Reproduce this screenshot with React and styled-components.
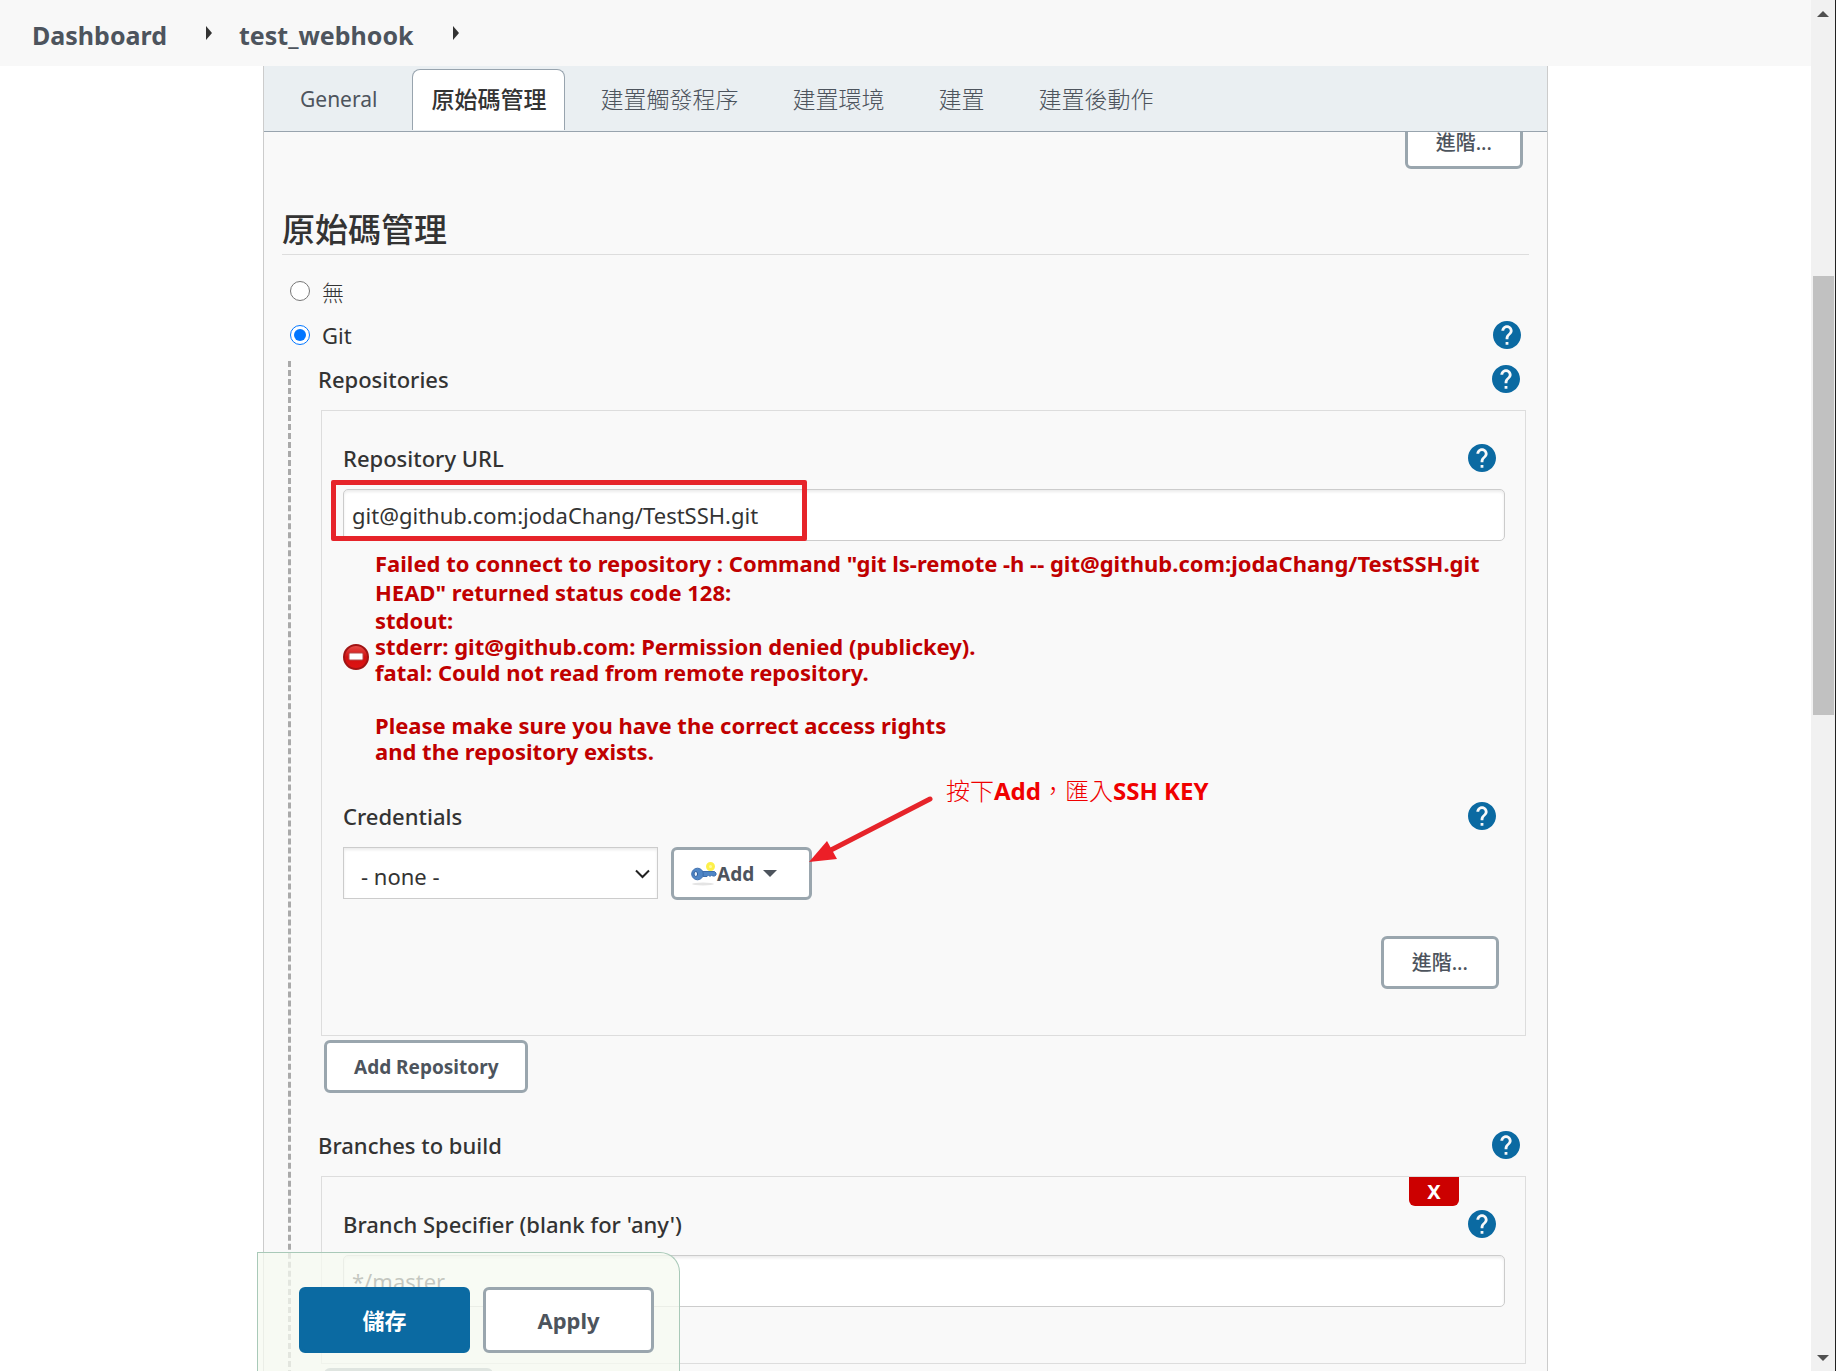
import React, { useState } from "react";
import styled, { createGlobalStyle, css } from "styled-components";

const GlobalStyle = createGlobalStyle`
  * {
    box-sizing: border-box;
  }
  body {
    margin: 0;
    background: #fff;
    color: #333;
    font-family: "Noto Sans", "Noto Sans CJK TC", sans-serif;
    font-size: 22px;
  }
  button, input, select {
    font-family: inherit;
    color: inherit;
  }
`;

const Page = styled.div`
  display: flex;
  height: 100vh;
  overflow: hidden;
`;

const Main = styled.div`
  flex: 1;
  min-width: 0;
  position: relative;
  overflow: hidden;
`;

const Breadcrumbs = styled.nav`
  display: flex;
  align-items: center;
  height: 66px;
  padding: 0 32px;
  background: #f8f8f8;
`;

const Crumb = styled.a`
  padding-top: 4px;
  color: #4d545d;
  font-size: 25px;
  font-weight: 700;
  line-height: 32px;
  text-decoration: none;
`;

const CrumbArrow = styled.span`
  margin: 0 27px 0 39px;
  border-left: 6px solid #333;
  border-top: 7px solid transparent;
  border-bottom: 7px solid transparent;
`;

const Panel = styled.div`
  margin: 0 263px;
  border: solid #ccc;
  border-width: 0 1px;
  background: #f9f9f9;
`;

const TabBar = styled.div`
  position: relative;
  z-index: 1;
  display: flex;
  gap: 16px;
  height: 66px;
  padding: 3px 17px 1px;
  background: #eaeff2;
  border-bottom: 1px solid #98a4ae;
`;

const Tab = styled.button`
  padding: 0 18px 2px;
  border: 1px solid transparent;
  border-bottom: 0;
  border-radius: 8px 8px 0 0;
  background: none;
  color: #4d545d;
  font-size: 23px;
  font-weight: 300;
  line-height: 32px;

  &:lang(en) {
    font-size: 21px;
    font-weight: 400;
  }
  ${(props) =>
    props.$active &&
    css`
      background: #fff;
      border-color: #98a4ae;
      color: #333;
      font-weight: 500;
    `}
`;

const Body = styled.form`
  margin: -16px 0 0;
  padding: 0 18px;
`;

const Button = styled.button`
  display: inline-flex;
  align-items: center;
  height: 53px;
  padding: ${(props) => (props.$menu ? "0 32px 0 17px" : "0 27px")};
  border: 3px solid #9aa6ae;
  border-radius: 6px;
  background: #fff;
  color: #4d545d;
  font-size: 19px;
  font-weight: 700;

  &:lang(zh) {
    padding: 0 28px 3px;
    font-size: 20px;
    font-weight: 500;
  }
`;

const ButtonRow = styled.div`
  display: flex;
  justify-content: ${(props) => (props.$end ? "flex-end" : "flex-start")};
  padding: 0 6px;
`;

const SectionTitle = styled.h2`
  margin: 37px 0 14px;
  border-bottom: 1px solid #ddd;
  font-size: 33px;
  font-weight: 500;
  line-height: 48px;
`;

const RadioRow = styled.div`
  display: flex;
  align-items: center;
  height: 44px;
  padding: 0 8px;

  label {
    flex: 1;
    padding-left: 12px;
  }
  label:lang(zh) {
    font-weight: 300;
  }
`;

const Radio = styled.input`
  width: 20px;
  height: 20px;
  margin: 0;
  accent-color: #0075ff;
`;

const Nested = styled.div`
  margin: 4px 0 0 6px;
  padding-left: 27px;
  border-left: 3px dashed #aaa;
`;

const LabelRow = styled.div`
  display: flex;
  align-items: center;
  justify-content: space-between;
  height: 36px;
  margin-bottom: 13px;
  padding-right: 9px;
  font-weight: 500;
`;

const HelpButton = styled.button`
  display: flex;
  padding: 0;
  border: 0;
  background: none;
  color: #0b6aa2;
`;

const Box = styled.div`
  position: relative;
  margin: 0 3px 4px;
  padding: 29px 20px ${(props) => (props.$short ? "56px" : "46px")} 21px;
  border: 1px solid #ddd;
`;

const fieldStyle = css`
  width: 100%;
  height: 52px;
  border: 1px solid #ccc;
  background: #fff;
  box-shadow: inset 0 2px 3px rgba(0, 0, 0, 0.08);
  font-size: 22px;
`;

const TextInput = styled.input`
  ${fieldStyle}
  display: block;
  padding: 0 8px;
  border-radius: 5px;
`;

const Highlighted = styled.div`
  position: relative;
`;

const Highlight = styled.div`
  position: absolute;
  left: -12px;
  top: -9px;
  width: 476px;
  height: 61px;
  border: 5px solid #e6242a;
  border-radius: 2px;
  pointer-events: none;
`;

const ErrorMessage = styled.div`
  display: flex;
  align-items: center;
  gap: 6px;
  margin: 8px 0 34px;
  color: #c00000;
  font-weight: 700;

  svg {
    flex: none;
  }
  p {
    margin: 0;
    line-height: 29px;
  }
  pre {
    margin: 0 0 27px;
    font: inherit;
    line-height: 26px;
  }
  pre:last-child {
    margin: 0;
  }
`;

const Credentials = styled.div`
  position: relative;
  display: flex;
  gap: 13px;
  margin-bottom: 36px;
`;

const SelectWrap = styled.div`
  position: relative;
  width: 315px;

  svg {
    position: absolute;
    right: 8px;
    top: 22px;
    pointer-events: none;
  }
`;

const Select = styled.select`
  ${fieldStyle}
  appearance: none;
  padding: 6px 17px 0;
  border-radius: 0;
`;

const Caret = styled.span`
  margin-left: 9px;
  border-top: 7px solid #4d545d;
  border-left: 7px solid transparent;
  border-right: 7px solid transparent;
`;

const Note = styled.div`
  position: absolute;
  left: 466px;
  top: -72px;
  display: flex;

  span {
    padding-left: 12px;
    color: #f00000;
    font-size: 24px;
    font-weight: 300;
    line-height: 32px;
    white-space: nowrap;
  }
  b {
    font-weight: 700;
  }
  svg {
    margin-top: 20px;
  }
`;

const DeleteButton = styled.button`
  position: absolute;
  top: 0;
  right: 66px;
  width: 50px;
  height: 29px;
  padding: 0;
  border: 0;
  border-radius: 0 0 6px 6px;
  background: #c00;
  color: #fff;
  font-size: 20px;
  font-weight: 700;
  line-height: 28px;
`;

const Spacer = styled.div`
  height: 34px;
`;

const SaveBar = styled.div`
  position: absolute;
  z-index: 2;
  left: 257px;
  bottom: 0;
  display: flex;
  gap: 13px;
  padding: 34px 25px 18px 41px;
  border: 1px solid #a9c9b8;
  border-bottom: 0;
  border-radius: 0 20px 0 0;
  background: rgba(245, 249, 240, 0.75);
`;

const SaveButton = styled.button`
  width: 171px;
  height: 66px;
  border: 3px solid ${(props) => (props.$primary ? "#0b6aa2" : "#9aa6ae")};
  border-radius: 6px;
  background: ${(props) => (props.$primary ? "#0b6aa2" : "#fff")};
  color: ${(props) => (props.$primary ? "#fff" : "#4d545d")};
  font-size: 22px;
  font-weight: 700;

  &:lang(zh) {
    padding-bottom: 4px;
  }
`;

const ScrollBar = styled.div`
  display: flex;
  flex-direction: column;
  align-items: center;
  justify-content: space-between;
  width: 25px;
  padding: 11px 0 10px;
  border-right: 1px solid #222;
  background: #f1f1f1;
`;

const ScrollTrack = styled.div`
  flex: 1;
  align-self: stretch;
  padding: 0 1px 0 2px;
`;

const ScrollThumb = styled.div`
  height: 439px;
  margin-top: 259px;
  background: #c1c1c1;
`;

const ScrollArrow = styled.span`
  border: solid transparent;
  border-width: ${(props) => (props.$down ? "6px 6px 0" : "0 6px 6px")};
  border-${(props) => (props.$down ? "top" : "bottom")}-color: #505050;
`;

function Help({ topic }) {
  return (
    <HelpButton type="button" aria-label={"Help for " + topic}>
      <svg width="28" height="28" viewBox="2 2 20 20" fill="currentColor">
        <path d="M12 2C6.48 2 2 6.48 2 12s4.48 10 10 10 10-4.48 10-10S17.52 2 12 2zm1 17h-2v-2h2v2zm2.07-7.75l-.9.92C13.45 12.9 13 13.5 13 15h-2v-.5c0-1.1.45-2.1 1.17-2.83l1.24-1.26c.37-.36.59-.86.59-1.41 0-1.1-.9-2-2-2s-2 .9-2 2H8c0-2.21 1.79-4 4-4s4 1.79 4 4c0 .88-.36 1.68-.93 2.25z" />
      </svg>
    </HelpButton>
  );
}

function ErrorIcon() {
  return (
    <svg width="26" height="26" viewBox="0 0 26 26">
      <defs>
        <linearGradient id="stop" x1="0" y1="0" x2="0" y2="1">
          <stop offset="0" stopColor="#e8504c" />
          <stop offset="0.5" stopColor="#d01010" />
          <stop offset="1" stopColor="#e01414" />
        </linearGradient>
      </defs>
      <circle cx="13" cy="13" r="12" fill="url(#stop)" stroke="#a01414" strokeWidth="2" />
      <rect x="6" y="9" width="14" height="7" rx="1" fill="#fff" stroke="#b54a4a" />
    </svg>
  );
}

function KeyIcon() {
  return (
    <svg width="26" height="26" viewBox="0 0 26 26">
      <ellipse cx="12" cy="23" rx="11" ry="1.5" fill="#e4e4e4" />
      <circle cx="19.500" cy="5.500" r="3" fill="#fff9a0" stroke="#fdf04a" strokeWidth="3" />
      <path
        d="M11 10.500h12.500l1.500 1.500v2l-1.500 1h-2l-1-1-1.500 1.500-1.500-1.500-1.500 1.500h-4z"
        fill="#4f86c6"
        stroke="#3d6ead"
      />
      <circle cx="6.500" cy="13" r="5.800" fill="#4f86c6" stroke="#3d6ead" />
      <ellipse cx="4.800" cy="13" rx="1.800" ry="2.500" fill="#e8f0f8" stroke="#2f5e9e" />
    </svg>
  );
}

const tabs = [
  { name: "General", lang: "en" },
  { name: "原始碼管理", lang: "zh-TW" },
  { name: "建置觸發程序", lang: "zh-TW" },
  { name: "建置環境", lang: "zh-TW" },
  { name: "建置", lang: "zh-TW" },
  { name: "建置後動作", lang: "zh-TW" },
];

export default function App() {
  const [tab, setTab] = useState("原始碼管理");
  const [scm, setScm] = useState("git");

  return (
    <Page>
      <GlobalStyle />
      <Main>
        <Breadcrumbs>
          <Crumb href="#dashboard">Dashboard</Crumb>
          <CrumbArrow />
          <Crumb href="#job">test_webhook</Crumb>
          <CrumbArrow />
        </Breadcrumbs>
        <Panel>
          <TabBar role="tablist">
            {tabs.map(({ name, lang }) => (
              <Tab
                key={name}
                type="button"
                role="tab"
                lang={lang}
                aria-selected={name === tab}
                $active={name === tab}
                onClick={() => setTab(name)}
              >
                {name}
              </Tab>
            ))}
          </TabBar>
          <Body id="config" onSubmit={(e) => e.preventDefault()}>
            <ButtonRow $end>
              <Button type="button" lang="zh-TW">
                進階...
              </Button>
            </ButtonRow>
            <SectionTitle>原始碼管理</SectionTitle>
            <RadioRow>
              <Radio
                type="radio"
                name="scm"
                id="scm-none"
                checked={scm === "none"}
                onChange={() => setScm("none")}
              />
              <label htmlFor="scm-none" lang="zh-TW">
                無
              </label>
            </RadioRow>
            <RadioRow>
              <Radio
                type="radio"
                name="scm"
                id="scm-git"
                checked={scm === "git"}
                onChange={() => setScm("git")}
              />
              <label htmlFor="scm-git">Git</label>
              <Help topic="Git" />
            </RadioRow>

            <Nested>
              <LabelRow>
                Repositories
                <Help topic="Repositories" />
              </LabelRow>
              <Box>
                <LabelRow>
                  <label htmlFor="repo-url">Repository URL</label>
                  <Help topic="Repository URL" />
                </LabelRow>
                <Highlighted>
                  <TextInput
                    id="repo-url"
                    type="text"
                    defaultValue="git@github.com:jodaChang/TestSSH.git"
                  />
                  <Highlight />
                </Highlighted>
                <ErrorMessage role="alert">
                  <ErrorIcon />
                  <div>
                    <p>
                      Failed to connect to repository : Command "git ls-remote -h --
                      git@github.com:jodaChang/TestSSH.git HEAD" returned status code
                      128:
                    </p>
                    <pre>
                      {"stdout:\nstderr: git@github.com: Permission denied (publickey).\nfatal: Could not read from remote repository."}
                    </pre>
                    <pre>
                      {"Please make sure you have the correct access rights\nand the repository exists."}
                    </pre>
                  </div>
                </ErrorMessage>
                <LabelRow>
                  <label htmlFor="credentials">Credentials</label>
                  <Help topic="Credentials" />
                </LabelRow>
                <Credentials>
                  <SelectWrap>
                    <Select id="credentials" defaultValue="">
                      <option value="">- none -</option>
                    </Select>
                    <svg width="15" height="10" viewBox="0 0 15 10">
                      <path d="M1 1.500l6.500 6.500 6.500-6.500" fill="none" stroke="#222" strokeWidth="2" />
                    </svg>
                  </SelectWrap>
                  <Button type="button" $menu>
                    <KeyIcon />
                    Add
                    <Caret />
                  </Button>
                  <Note>
                    <svg width="125" height="72" viewBox="0 0 125 72">
                      <path d="M22 55L121 4" stroke="#e6242a" strokeWidth="5" strokeLinecap="round" />
                      <path d="M0 67l18-21 10 18z" fill="#ec1f27" />
                    </svg>
                    <span>
                      按下<b>Add</b>，匯入<b>SSH KEY</b>
                    </span>
                  </Note>
                </Credentials>
                <ButtonRow $end>
                  <Button type="button" lang="zh-TW">
                    進階...
                  </Button>
                </ButtonRow>
              </Box>
              <ButtonRow>
                <Button type="button">Add Repository</Button>
              </ButtonRow>
              <Spacer />
              <LabelRow>
                Branches to build
                <Help topic="Branches to build" />
              </LabelRow>
              <Box $short>
                <DeleteButton type="button" aria-label="Delete branch">
                  X
                </DeleteButton>
                <LabelRow>
                  <label htmlFor="branch">Branch Specifier (blank for 'any')</label>
                  <Help topic="Branch Specifier" />
                </LabelRow>
                <TextInput id="branch" type="text" defaultValue="*/master" />
              </Box>
              <ButtonRow>
                <Button type="button">Add Branch</Button>
              </ButtonRow>
            </Nested>
          </Body>
        </Panel>
        <SaveBar>
          <SaveButton type="submit" form="config" lang="zh-TW" $primary>
            儲存
          </SaveButton>
          <SaveButton type="button">Apply</SaveButton>
        </SaveBar>
      </Main>
      <ScrollBar aria-hidden="true">
        <ScrollArrow />
        <ScrollTrack>
          <ScrollThumb />
        </ScrollTrack>
        <ScrollArrow $down />
      </ScrollBar>
    </Page>
  );
}
